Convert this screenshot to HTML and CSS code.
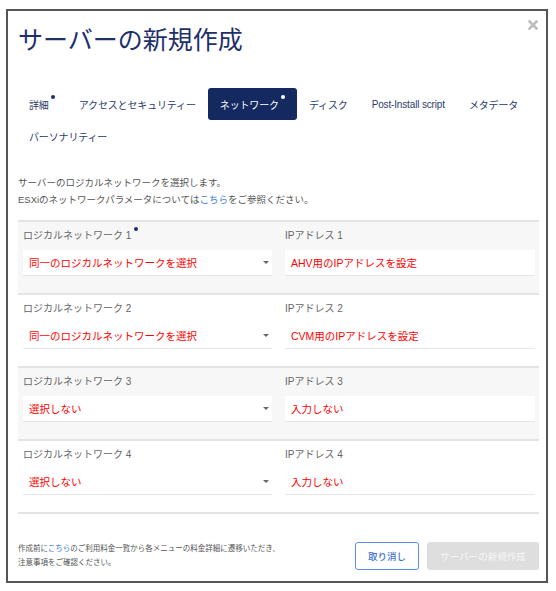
FILE: index.html
```html
<!DOCTYPE html>
<html lang="ja">
<head>
<meta charset="utf-8">
<title>サーバーの新規作成</title>
<link rel="stylesheet" href="styles.css">
</head>
<body>
<div class="modal">
  <span class="close" aria-label="閉じる">
    <svg width="10" height="10" viewBox="0 0 10 10"><path d="M1.5 1.5 L8.5 8.5 M8.5 1.5 L1.5 8.5" stroke="#bdbdbd" stroke-width="2.6" stroke-linecap="square"/></svg>
  </span>
  <h1 class="title">サーバーの新規作成</h1>
  <nav class="tabs">
    <span class="tab">詳細<i class="dot"></i></span>
    <span class="tab">アクセスとセキュリティー</span>
    <span class="tab active">ネットワーク<i class="dot"></i></span>
    <span class="tab">ディスク</span>
    <span class="tab">Post-Install script</span>
    <span class="tab">メタデータ</span>
    <span class="tab">パーソナリティー</span>
  </nav>
  <p class="desc">サーバーのロジカルネットワークを選択します。<br>ESXiのネットワークパラメータについては<a href="#">こちら</a>をご参照ください。</p>
  <div class="sections">
    <div class="row gray">
      <div class="field">
        <div class="label">ロジカルネットワーク 1<i class="dot"></i></div>
        <div class="control select">同一のロジカルネットワークを選択<span class="caret"></span></div>
      </div>
      <div class="field">
        <div class="label">IPアドレス 1</div>
        <div class="control">AHV用のIPアドレスを設定</div>
      </div>
    </div>
    <div class="row">
      <div class="field">
        <div class="label">ロジカルネットワーク 2</div>
        <div class="control select">同一のロジカルネットワークを選択<span class="caret"></span></div>
      </div>
      <div class="field">
        <div class="label">IPアドレス 2</div>
        <div class="control">CVM用のIPアドレスを設定</div>
      </div>
    </div>
    <div class="row gray">
      <div class="field">
        <div class="label">ロジカルネットワーク 3</div>
        <div class="control select">選択しない<span class="caret"></span></div>
      </div>
      <div class="field">
        <div class="label">IPアドレス 3</div>
        <div class="control">入力しない</div>
      </div>
    </div>
    <div class="row">
      <div class="field">
        <div class="label">ロジカルネットワーク 4</div>
        <div class="control select">選択しない<span class="caret"></span></div>
      </div>
      <div class="field">
        <div class="label">IPアドレス 4</div>
        <div class="control">入力しない</div>
      </div>
    </div>
  </div>
  <footer class="footer">
    <p class="note">作成前に<a href="#">こちら</a>のご利用料金一覧から各メニューの料金詳細に遷移いただき、<br>注意事項をご確認ください。</p>
    <div class="buttons">
      <button class="btn cancel">取り消し</button>
      <button class="btn create" disabled>サーバーの新規作成</button>
    </div>
  </footer>
</div>
</body>
</html>
```

FILE: styles.css
```css
body {
  margin: 0;
  background: #fff;
  font-family: "Liberation Sans", "Noto Sans CJK JP", sans-serif;
}

.modal {
  position: relative;
  margin: 9px 0 0 6px;
  width: 542px;
  height: 574px;
  box-sizing: border-box;
  border: 2px solid #555;
  padding: 14px 7px 0 10px;
}

.close {
  position: absolute;
  top: 9px;
  right: 8px;
  width: 10px;
  height: 10px;
  display: block;
}

.close svg {
  display: block;
}

.title {
  margin: 0;
  font-size: 25px;
  line-height: 30px;
  font-weight: normal;
  color: #1e2f6c;
}

.tabs {
  display: flex;
  flex-wrap: wrap;
  margin: 33px -8px 0 -1px;
}

.tab {
  height: 32px;
  padding: 0 12px;
  display: flex;
  align-items: center;
  font-size: 10px;
  letter-spacing: -0.15px;
  color: #2b3a6e;
  border-radius: 3px;
  box-sizing: border-box;
}

.tab.active {
  background: #13295f;
  color: #fff;
}

.dot {
  display: block;
  width: 4px;
  height: 4px;
  border-radius: 50%;
  background: #1e2f6c;
  margin-left: 2px;
  align-self: flex-start;
  margin-top: 7px;
}

.tab.active .dot {
  background: #fff;
}

.desc {
  margin: 22px 0 0;
  font-size: 9.5px;
  line-height: 17px;
  color: #555;
}

.desc a,
.note a {
  color: #3b7ddd;
  text-decoration: none;
}

.sections {
  margin-top: 12px;
}

.row {
  display: grid;
  grid-template-columns: 249px 250px;
  column-gap: 13px;
  padding: 7px 4px 17px 5px;
  border-top: 2px solid #e4e4e4;
}

.row.gray {
  background: #f7f7f7;
}

.row:last-child {
  border-bottom: 2px solid #e4e4e4;
}

.label {
  display: flex;
  align-items: flex-start;
  font-size: 10px;
  line-height: 14px;
  color: #666;
  margin-bottom: 7px;
}

.label .dot {
  margin-top: -2px;
  margin-left: 3px;
}

.control {
  height: 26px;
  box-sizing: border-box;
  background: #fff;
  border-bottom: 1px solid #e6e6e6;
  display: flex;
  align-items: center;
  padding: 0 6px;
  font-size: 10.5px;
  color: #f00;
}

.select {
  padding-right: 3px;
}

.caret {
  margin-left: auto;
  width: 0;
  height: 0;
  border-left: 3px solid transparent;
  border-right: 3px solid transparent;
  border-top: 3px solid #666;
}

.footer {
  display: flex;
  align-items: center;
  justify-content: space-between;
  margin-top: 28px;
}

.note {
  margin: 0;
  font-size: 7.5px;
  line-height: 14px;
  color: #555;
}

.buttons {
  display: flex;
  gap: 8px;
}

.btn {
  height: 28px;
  border-radius: 3px;
  font-family: inherit;
  font-size: 9.5px;
  padding: 0;
  cursor: pointer;
}

.cancel {
  width: 64px;
  background: #fff;
  border: 1px solid #5b8fe8;
  color: #3d72d8;
  font-weight: 500;
}

.create {
  width: 112px;
  background: #dedede;
  border: none;
  color: #f6f6f6;
}
```
